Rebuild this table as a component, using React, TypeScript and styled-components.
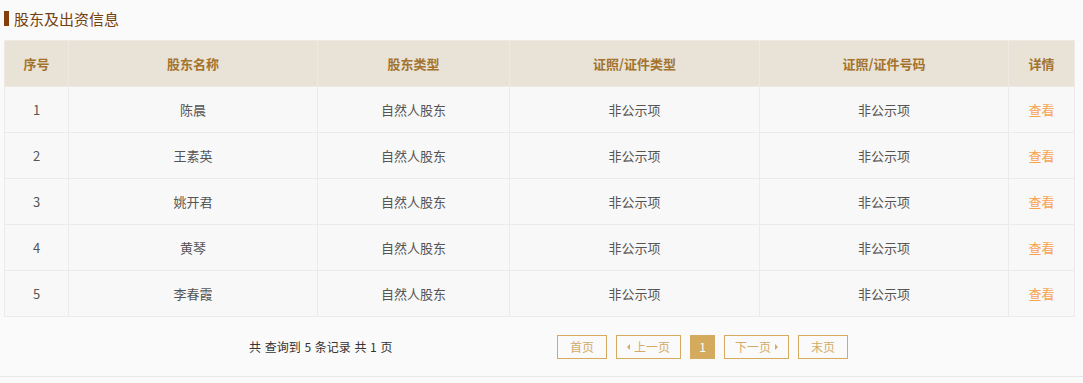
import styled, { createGlobalStyle } from "styled-components";

const GlobalStyle = createGlobalStyle`
  body {
    margin: 0;
    background: #fafafa;
    font-family: "Noto Sans CJK SC", "Noto Sans", sans-serif;
  }
`;

const Page = styled.div`
  width: 1083px;
  height: 383px;
  box-sizing: border-box;
  padding: 0 9px 0 4px;
`;

const SectionTitle = styled.h2`
  display: flex;
  align-items: center;
  gap: 5px;
  margin: 0;
  height: 37px;
  font-size: 15px;
  font-weight: 400;
  color: #74400f;
  line-height: 37px;

  &::before {
    content: "";
    width: 5px;
    height: 15px;
    background: #84400c;
  }
`;

const Table = styled.table`
  width: 1070px;
  margin-top: 3px;
  border-collapse: collapse;
  table-layout: fixed;
  font-size: 13px;
`;

const Th = styled.th`
  height: 45px;
  padding: 0;
  background: #e9e2d7;
  color: #a3732d;
  font-weight: 700;
  text-align: center;
  border: 1px solid #eeeae3;
`;

const Td = styled.td`
  height: 45px;
  padding: 0;
  text-align: center;
  color: #555;
  background: #f8f8f8;
  border: 1px solid #ebebeb;
`;

const ViewLink = styled.a`
  color: #f9a250;
  cursor: pointer;
`;

const Footer = styled.div`
  display: flex;
  align-items: center;
  height: 59px;
  border-bottom: 1px solid #e8e8e8;
  margin: 0 -9px 0 -4px;
  font-size: 12px;
`;

const Summary = styled.span`
  color: #333;
  margin-left: 249px;
  width: 308px;
  word-spacing: 1px;
`;

const Pager = styled.div`
  display: flex;
  gap: 9px;
`;

const PageBtn = styled.span<{ $w: number; $active?: boolean }>`
  display: flex;
  align-items: center;
  justify-content: center;
  gap: 4px;
  box-sizing: border-box;
  width: ${(p) => p.$w}px;
  height: 24px;
  border: 1px solid #d5ab5f;
  background: ${(p) => (p.$active ? "#d4aa5c" : "transparent")};
  color: ${(p) => (p.$active ? "#fff" : "#d4aa66")};
  cursor: pointer;
`;

const Arrow = styled.span<{ $dir: "left" | "right" }>`
  width: 0;
  height: 0;
  border-top: 3px solid transparent;
  border-bottom: 3px solid transparent;
  ${(p) =>
    p.$dir === "left"
      ? "border-right: 3px solid #d4aa66;"
      : "border-left: 3px solid #d4aa66;"}
`;

const columns = [
  { title: "序号", width: 64 },
  { title: "股东名称", width: 249 },
  { title: "股东类型", width: 192 },
  { title: "证照/证件类型", width: 250 },
  { title: "证照/证件号码", width: 249 },
  { title: "详情", width: 66 },
];

const holders = ["陈晨", "王素英", "姚开君", "黄琴", "李春霞"];

export default function App() {
  return (
    <Page>
      <GlobalStyle />
      <SectionTitle>股东及出资信息</SectionTitle>
      <Table>
        <colgroup>
          {columns.map((c) => (
            <col key={c.title} style={{ width: c.width }} />
          ))}
        </colgroup>
        <thead>
          <tr>
            {columns.map((c) => (
              <Th key={c.title}>{c.title}</Th>
            ))}
          </tr>
        </thead>
        <tbody>
          {holders.map((name, i) => (
            <tr key={name}>
              <Td>{i + 1}</Td>
              <Td>{name}</Td>
              <Td>自然人股东</Td>
              <Td>非公示项</Td>
              <Td>非公示项</Td>
              <Td>
                <ViewLink>查看</ViewLink>
              </Td>
            </tr>
          ))}
        </tbody>
      </Table>
      <Footer>
        <Summary>共 查询到 5 条记录 共 1 页</Summary>
        <Pager>
          <PageBtn $w={50}>首页</PageBtn>
          <PageBtn $w={65}>
            <Arrow $dir="left" />
            上一页
          </PageBtn>
          <PageBtn $w={25} $active>
            1
          </PageBtn>
          <PageBtn $w={65}>
            下一页
            <Arrow $dir="right" />
          </PageBtn>
          <PageBtn $w={50}>末页</PageBtn>
        </Pager>
      </Footer>
    </Page>
  );
}
